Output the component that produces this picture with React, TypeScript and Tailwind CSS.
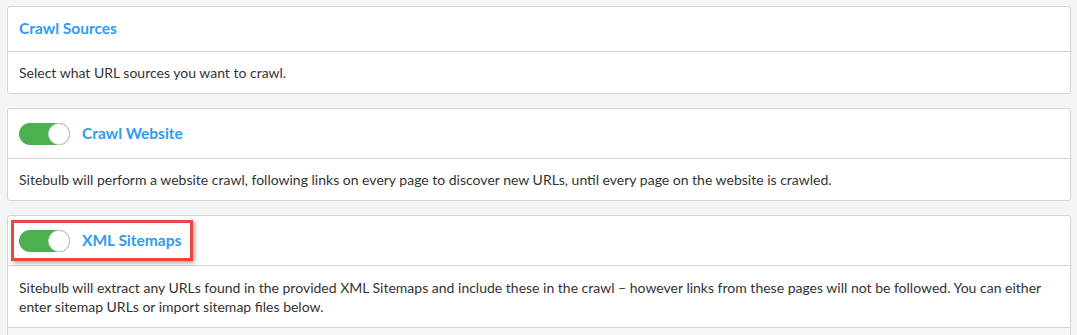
import React from "react";

function Toggle() {
  return (
    <div className="relative w-[51px] h-[22px] rounded-full bg-[#4caf50] shrink-0">
      <div className="absolute right-0 top-0 w-[22px] h-[22px] rounded-full bg-white border border-[#d0d0d0]" />
    </div>
  );
}

function Card({
  title,
  toggle,
  highlight,
  children,
  footer,
}: {
  title: string;
  toggle?: boolean;
  highlight?: boolean;
  children: React.ReactNode;
  footer?: boolean;
}) {
  const head = (
    <div className="flex items-center gap-[12px]">
      {toggle && <Toggle />}
      <span className="text-[15.5px] font-bold text-[#2f9bf0] leading-none">{title}</span>
    </div>
  );
  return (
    <div className="bg-white border border-[#d4d4d4] rounded-[3px]">
      <div
        className={
          toggle
            ? "h-[50px] flex items-center px-[11px] border-b border-[#d4d4d4]"
            : "h-[45px] flex items-center px-[11px] border-b border-[#d4d4d4]"
        }
      >
        {highlight ? (
          <div className="relative -ml-[8px] h-[41px] pl-[5px] pr-[9px] flex items-center border-[3px] border-[#ee4444] shadow-[2px_2px_4px_rgba(0,0,0,0.35)]">
            {head}
          </div>
        ) : (
          head
        )}
      </div>
      <div className={footer ? "px-[11px] pt-[12px] pb-[11px] text-[14px] leading-[19px] text-[#333]" : "px-[11px] py-[11px] text-[14px] leading-[19px] text-[#333]"}>
        {children}
      </div>
      {footer && <div className="h-[20px] border-t border-[#d4d4d4] bg-[#f6f6f6]" />}
    </div>
  );
}

export default function App() {
  return (
    <div
      className="w-[1077px] h-[335px] overflow-hidden bg-[#f3f4f4] pl-[7px] pr-[6px] pt-[6px] flex flex-col gap-[14px]"
      style={{ fontFamily: "Lato, 'Open Sans', sans-serif" }}
    >
      <Card title="Crawl Sources">Select what URL sources you want to crawl.</Card>
      <Card title="Crawl Website" toggle>
        Sitebulb will perform a website crawl, following links on every page to discover new URLs, until every page on
        the website is crawled.
      </Card>
      <Card title="XML Sitemaps" toggle highlight footer>
        Sitebulb will extract any URLs found in the provided XML Sitemaps and include these in the crawl – however links
        from these pages will not be followed. You can either enter sitemap URLs or import sitemap files below.
      </Card>
    </div>
  );
}
